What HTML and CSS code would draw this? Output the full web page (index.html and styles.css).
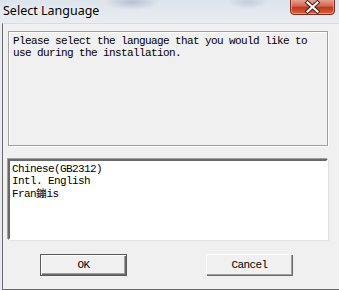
FILE: index.html
```html
<!DOCTYPE html>
<html>
<head>
<meta charset="utf-8">
<link rel="stylesheet" href="styles.css">
</head>
<body>
<div class="window">
  <div class="titlebar">
    <span class="title">Select Language</span>
    <div class="close">
      <svg width="45" height="15" viewBox="0 0 45 15">
        <defs>
          <linearGradient id="cg" x1="0" y1="0" x2="0" y2="1">
            <stop offset="0" stop-color="#e9a89a"/>
            <stop offset="0.45" stop-color="#d3674f"/>
            <stop offset="0.55" stop-color="#c2381f"/>
            <stop offset="1" stop-color="#d9673f"/>
          </linearGradient>
        </defs>
        <path d="M0.5 -1 V11 Q0.5 14.5 4 14.5 H41 Q44.5 14.5 44.5 11 V-1 Z" fill="url(#cg)" stroke="#7d2d22" stroke-width="1"/>
        <path d="M1.5 0 V10.5 Q1.5 13.5 4.5 13.5 H40.5 Q43.5 13.5 43.5 10.5 V0" fill="none" stroke="#f3b7a6" stroke-opacity="0.6" stroke-width="1"/>
        <path d="M17.5 2.5 L27.5 11.5 M27.5 2.5 L17.5 11.5" stroke="#3d1a14" stroke-width="4" stroke-linecap="square"/>
        <path d="M17.5 2.5 L27.5 11.5 M27.5 2.5 L17.5 11.5" stroke="#ffffff" stroke-width="2.2" stroke-linecap="square"/>
      </svg>
    </div>
  </div>
  <div class="client">
    <div class="message">Please select the language that you would like to use during the installation.</div>
    <div class="listbox">
      <div class="item">Chinese(GB2312)</div>
      <div class="item">Intl. English</div>
      <div class="item">Fran<span class="cjk">鏰</span>is</div>
    </div>
    <div class="buttons">
      <button class="btn default">OK</button>
      <button class="btn">Cancel</button>
    </div>
  </div>
</div>
</body>
</html>
```

FILE: styles.css
```css
html, body {
  margin: 0;
  padding: 0;
}
body {
  width: 339px;
  height: 290px;
  overflow: hidden;
  background: #e6eaef;
}
.window {
  width: 339px;
  height: 290px;
  display: flex;
  flex-direction: column;
  background:
    radial-gradient(ellipse 28px 8px at 132px 2px, rgba(150,165,190,0.55), rgba(150,165,190,0) 100%),
    radial-gradient(ellipse 20px 7px at 248px 2px, rgba(160,172,195,0.45), rgba(160,172,195,0) 100%),
    linear-gradient(#dde4ec, #e9edf2 22px, #e7ebf0);
}
.titlebar {
  height: 23px;
  display: flex;
  align-items: flex-start;
}
.title {
  font-family: "Noto Sans", sans-serif;
  font-size: 12.5px;
  line-height: 17px;
  color: #000;
  margin-left: 3px;
  margin-top: 2px;
  text-shadow: 0 0 6px rgba(255,255,255,0.9);
}
.close {
  margin-left: auto;
  margin-right: 4px;
  width: 45px;
  height: 15px;
}
.close svg { display: block; }
.client {
  margin-left: 2px;
  width: 332px;
  height: 263px;
  background: #f0f0f0;
  border-left: 1px solid #6b6b6b;
  border-right: 1px solid #6b6b6b;
  border-bottom: 1px solid #6b6b6b;
  border-top: 1px solid #dcdcdc;
  padding: 7px 0 0 5px;
  box-sizing: content-box;
  display: flex;
  flex-direction: column;
  font-family: "Liberation Mono", "Noto Sans CJK SC", monospace;
  font-size: 11px;
  letter-spacing: -0.6px;
  color: #000;
}
.message {
  width: 314px;
  height: 110px;
  border: 1px solid #a0a0a0;
  box-shadow: inset 1px 1px 0 #fff, 1px 1px 0 #fff;
  padding: 3px 0 0 4px;
  line-height: 12px;
}
.listbox {
  margin-top: 13px;
  width: 314px;
  height: 75px;
  background: #fff;
  border-top: 2px solid #696969;
  border-left: 2px solid #696969;
  border-right: 2px solid #fff;
  border-bottom: 2px solid #fff;
  box-shadow: -1px -1px 0 #a0a0a0, 1px 1px 0 #e3e3e3;
  padding: 2px 0 0 2px;
  line-height: 12px;
}
.item {
  white-space: nowrap;
  height: 12px;
}
.cjk {
  display: inline-block;
  vertical-align: baseline;
  height: 12px;
  font-family: "Noto Sans CJK SC", sans-serif;
  font-size: 10.5px;
  letter-spacing: 0;
  line-height: 12px;
}
.buttons {
  margin-top: 14px;
  display: flex;
  padding-left: 32px;
  gap: 79px;
}
.btn {
  width: 87px;
  height: 22px;
  margin: 0;
  padding: 0;
  background: #f0f0f0;
  font-family: "Liberation Mono", monospace;
  font-size: 11px;
  letter-spacing: -0.6px;
  color: #000;
  border: none;
  box-shadow: inset 1px 1px 0 #fff, inset -1px -1px 0 #696969, inset -2px -2px 0 #a0a0a0;
}
.btn.default {
  border: 1px solid #5a5a5a;
  box-shadow: inset 1px 1px 0 #fff, inset -1px -1px 0 #696969, inset -2px -2px 0 #a0a0a0;
}
```
